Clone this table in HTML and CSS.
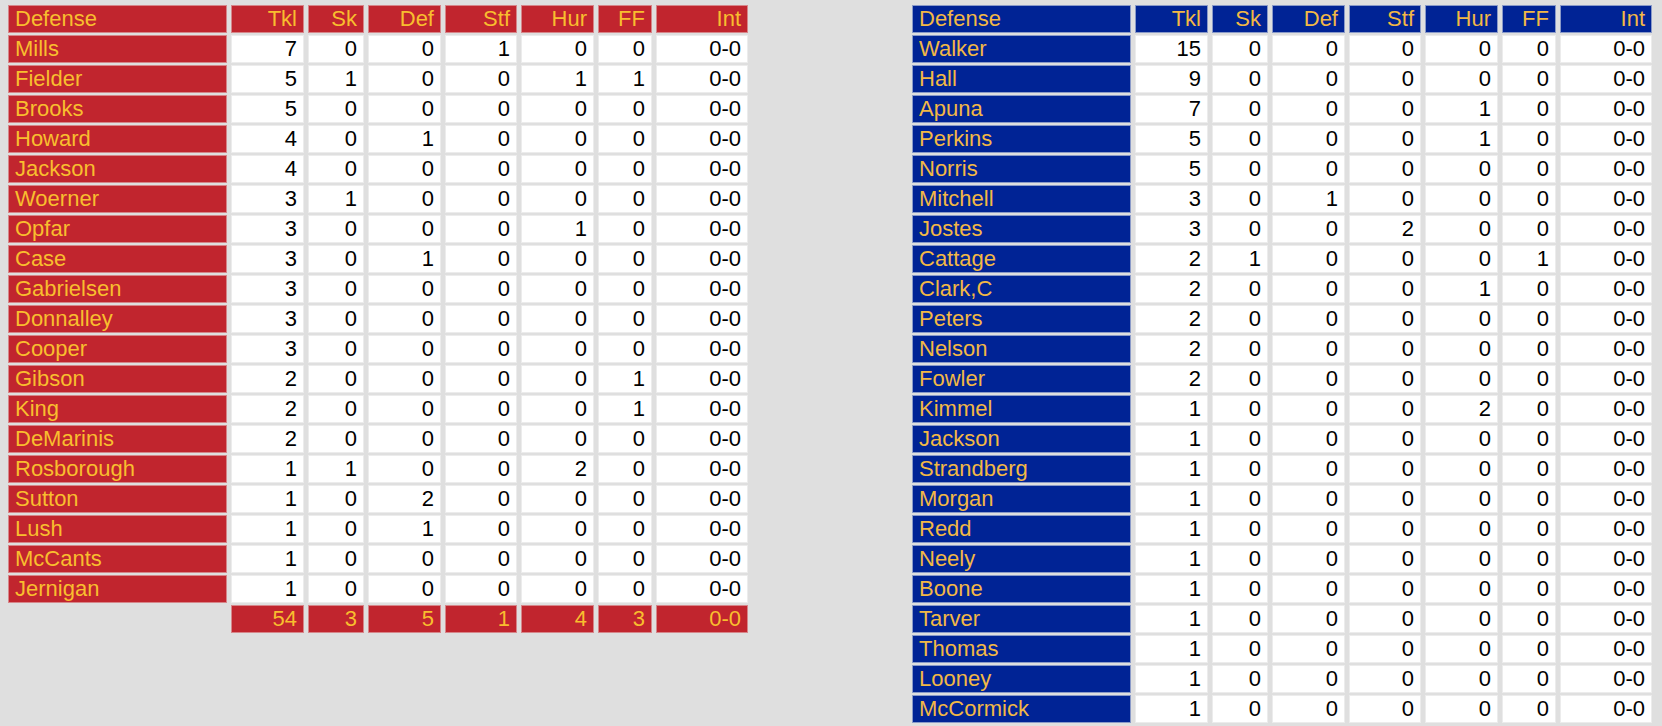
FILE: index.html
```html
<!DOCTYPE html>
<html>
<head>
<meta charset="utf-8">
<link rel="stylesheet" href="styles.css">
</head>
<body>
<div class="page">
<table class="stats red">
<colgroup><col class="c-name"><col class="c-tkl"><col class="c-sk"><col class="c-def"><col class="c-stf"><col class="c-hur"><col class="c-ff"><col class="c-int"></colgroup>
<thead><tr><th class="name">Defense</th><th>Tkl</th><th>Sk</th><th>Def</th><th>Stf</th><th>Hur</th><th>FF</th><th>Int</th></tr></thead>
<tbody>
<tr><td class="name">Mills</td><td>7</td><td>0</td><td>0</td><td>1</td><td>0</td><td>0</td><td>0-0</td></tr>
<tr><td class="name">Fielder</td><td>5</td><td>1</td><td>0</td><td>0</td><td>1</td><td>1</td><td>0-0</td></tr>
<tr><td class="name">Brooks</td><td>5</td><td>0</td><td>0</td><td>0</td><td>0</td><td>0</td><td>0-0</td></tr>
<tr><td class="name">Howard</td><td>4</td><td>0</td><td>1</td><td>0</td><td>0</td><td>0</td><td>0-0</td></tr>
<tr><td class="name">Jackson</td><td>4</td><td>0</td><td>0</td><td>0</td><td>0</td><td>0</td><td>0-0</td></tr>
<tr><td class="name">Woerner</td><td>3</td><td>1</td><td>0</td><td>0</td><td>0</td><td>0</td><td>0-0</td></tr>
<tr><td class="name">Opfar</td><td>3</td><td>0</td><td>0</td><td>0</td><td>1</td><td>0</td><td>0-0</td></tr>
<tr><td class="name">Case</td><td>3</td><td>0</td><td>1</td><td>0</td><td>0</td><td>0</td><td>0-0</td></tr>
<tr><td class="name">Gabrielsen</td><td>3</td><td>0</td><td>0</td><td>0</td><td>0</td><td>0</td><td>0-0</td></tr>
<tr><td class="name">Donnalley</td><td>3</td><td>0</td><td>0</td><td>0</td><td>0</td><td>0</td><td>0-0</td></tr>
<tr><td class="name">Cooper</td><td>3</td><td>0</td><td>0</td><td>0</td><td>0</td><td>0</td><td>0-0</td></tr>
<tr><td class="name">Gibson</td><td>2</td><td>0</td><td>0</td><td>0</td><td>0</td><td>1</td><td>0-0</td></tr>
<tr><td class="name">King</td><td>2</td><td>0</td><td>0</td><td>0</td><td>0</td><td>1</td><td>0-0</td></tr>
<tr><td class="name">DeMarinis</td><td>2</td><td>0</td><td>0</td><td>0</td><td>0</td><td>0</td><td>0-0</td></tr>
<tr><td class="name">Rosborough</td><td>1</td><td>1</td><td>0</td><td>0</td><td>2</td><td>0</td><td>0-0</td></tr>
<tr><td class="name">Sutton</td><td>1</td><td>0</td><td>2</td><td>0</td><td>0</td><td>0</td><td>0-0</td></tr>
<tr><td class="name">Lush</td><td>1</td><td>0</td><td>1</td><td>0</td><td>0</td><td>0</td><td>0-0</td></tr>
<tr><td class="name">McCants</td><td>1</td><td>0</td><td>0</td><td>0</td><td>0</td><td>0</td><td>0-0</td></tr>
<tr><td class="name">Jernigan</td><td>1</td><td>0</td><td>0</td><td>0</td><td>0</td><td>0</td><td>0-0</td></tr>
<tr class="total"><td class="blank"></td><td>54</td><td>3</td><td>5</td><td>1</td><td>4</td><td>3</td><td>0-0</td></tr>
</tbody>
</table>

<table class="stats blue">
<colgroup><col class="c-name"><col class="c-tkl"><col class="c-sk"><col class="c-def"><col class="c-stf"><col class="c-hur"><col class="c-ff"><col class="c-int"></colgroup>
<thead><tr><th class="name">Defense</th><th>Tkl</th><th>Sk</th><th>Def</th><th>Stf</th><th>Hur</th><th>FF</th><th>Int</th></tr></thead>
<tbody>
<tr><td class="name">Walker</td><td>15</td><td>0</td><td>0</td><td>0</td><td>0</td><td>0</td><td>0-0</td></tr>
<tr><td class="name">Hall</td><td>9</td><td>0</td><td>0</td><td>0</td><td>0</td><td>0</td><td>0-0</td></tr>
<tr><td class="name">Apuna</td><td>7</td><td>0</td><td>0</td><td>0</td><td>1</td><td>0</td><td>0-0</td></tr>
<tr><td class="name">Perkins</td><td>5</td><td>0</td><td>0</td><td>0</td><td>1</td><td>0</td><td>0-0</td></tr>
<tr><td class="name">Norris</td><td>5</td><td>0</td><td>0</td><td>0</td><td>0</td><td>0</td><td>0-0</td></tr>
<tr><td class="name">Mitchell</td><td>3</td><td>0</td><td>1</td><td>0</td><td>0</td><td>0</td><td>0-0</td></tr>
<tr><td class="name">Jostes</td><td>3</td><td>0</td><td>0</td><td>2</td><td>0</td><td>0</td><td>0-0</td></tr>
<tr><td class="name">Cattage</td><td>2</td><td>1</td><td>0</td><td>0</td><td>0</td><td>1</td><td>0-0</td></tr>
<tr><td class="name">Clark,C</td><td>2</td><td>0</td><td>0</td><td>0</td><td>1</td><td>0</td><td>0-0</td></tr>
<tr><td class="name">Peters</td><td>2</td><td>0</td><td>0</td><td>0</td><td>0</td><td>0</td><td>0-0</td></tr>
<tr><td class="name">Nelson</td><td>2</td><td>0</td><td>0</td><td>0</td><td>0</td><td>0</td><td>0-0</td></tr>
<tr><td class="name">Fowler</td><td>2</td><td>0</td><td>0</td><td>0</td><td>0</td><td>0</td><td>0-0</td></tr>
<tr><td class="name">Kimmel</td><td>1</td><td>0</td><td>0</td><td>0</td><td>2</td><td>0</td><td>0-0</td></tr>
<tr><td class="name">Jackson</td><td>1</td><td>0</td><td>0</td><td>0</td><td>0</td><td>0</td><td>0-0</td></tr>
<tr><td class="name">Strandberg</td><td>1</td><td>0</td><td>0</td><td>0</td><td>0</td><td>0</td><td>0-0</td></tr>
<tr><td class="name">Morgan</td><td>1</td><td>0</td><td>0</td><td>0</td><td>0</td><td>0</td><td>0-0</td></tr>
<tr><td class="name">Redd</td><td>1</td><td>0</td><td>0</td><td>0</td><td>0</td><td>0</td><td>0-0</td></tr>
<tr><td class="name">Neely</td><td>1</td><td>0</td><td>0</td><td>0</td><td>0</td><td>0</td><td>0-0</td></tr>
<tr><td class="name">Boone</td><td>1</td><td>0</td><td>0</td><td>0</td><td>0</td><td>0</td><td>0-0</td></tr>
<tr><td class="name">Tarver</td><td>1</td><td>0</td><td>0</td><td>0</td><td>0</td><td>0</td><td>0-0</td></tr>
<tr><td class="name">Thomas</td><td>1</td><td>0</td><td>0</td><td>0</td><td>0</td><td>0</td><td>0-0</td></tr>
<tr><td class="name">Looney</td><td>1</td><td>0</td><td>0</td><td>0</td><td>0</td><td>0</td><td>0-0</td></tr>
<tr><td class="name">McCormick</td><td>1</td><td>0</td><td>0</td><td>0</td><td>0</td><td>0</td><td>0-0</td></tr>
</tbody>
</table>
</div>
</body>
</html>
```

FILE: styles.css
```css
html, body {
  margin: 0;
  padding: 0;
  background: #dfdfdf;
}

.page {
  display: flex;
  align-items: flex-start;
  gap: 156px;
  padding: 3px 0 0 4px;
}

.stats {
  border-collapse: separate;
  border-spacing: 4px 2px;
  table-layout: fixed;
  font-family: "Liberation Sans", Arial, sans-serif;
  font-size: 22px;
}

.c-name { width: 219px; }
.c-tkl { width: 73px; }
.c-sk { width: 56px; }
.c-def { width: 73px; }
.c-stf { width: 72px; }
.c-hur { width: 73px; }
.c-ff { width: 54px; }
.c-int { width: 92px; }

.stats th,
.stats td {
  box-sizing: border-box;
  height: 28px;
  padding: 0 6px 0 6px;
  line-height: 26px;
  border: 1px solid #ececec;
  text-align: right;
  font-weight: normal;
  white-space: nowrap;
  overflow: hidden;
  background: #ffffff;
  color: #000000;
}

.stats th.name,
.stats td.name {
  text-align: left;
}

.stats td.blank {
  background: transparent;
  border-color: transparent;
}

.red th,
.red td.name,
.red tr.total td {
  background: #c1252e;
  color: #f8be2e;
  border-color: #d6868a;
}

.red tr.total td.blank {
  background: transparent;
  border-color: transparent;
}

.blue th,
.blue td.name {
  background: #002395;
  color: #f2b845;
  border-color: #8a9ac8;
}
```
